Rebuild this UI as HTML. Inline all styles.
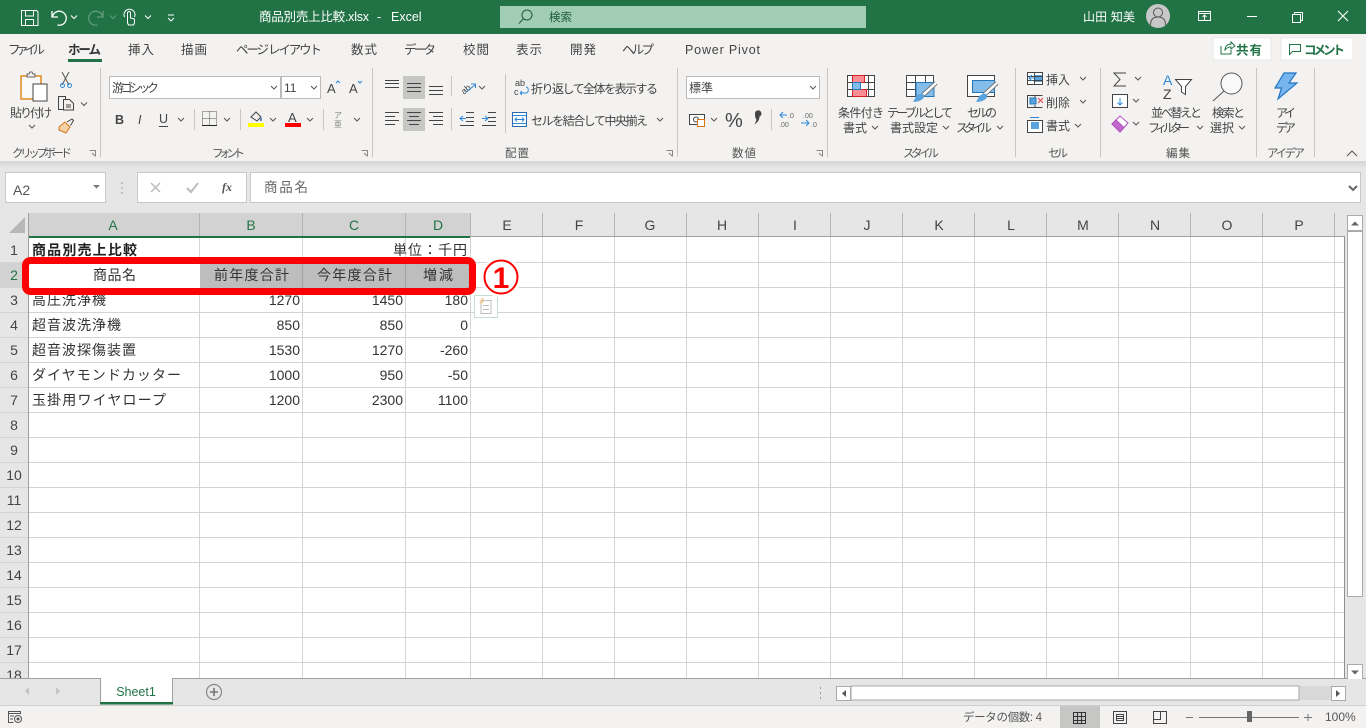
<!DOCTYPE html>
<html lang="ja"><head><meta charset="utf-8"><title>商品別売上比較.xlsx - Excel</title>
<style>
html,body{margin:0;padding:0;width:1366px;height:728px;overflow:hidden;background:#e6e6e6}
svg{display:block;position:absolute;left:0;top:0}
text{font-family:"Liberation Sans","Noto Sans CJK JP",sans-serif;fill:#444}
.r{font-size:12px;fill:#444}
.t{font-size:12.5px;fill:#444}
.g{font-size:11.5px;fill:#555}
.c{font-size:14px;fill:#333}
.h{font-size:14px;fill:#444;text-anchor:middle}
.s{font-size:14px;fill:#217346;text-anchor:middle}
.e{text-anchor:end}
.m{text-anchor:middle}
.ch{fill:none;stroke:#555;stroke-width:1}
.i{fill:none;stroke:#444;stroke-width:1}
.w{fill:none;stroke:#fff;stroke-width:1}
</style></head><body>
<svg width="1366" height="728" viewBox="0 0 1366 728">
<defs><path id="v" d="M0 0l3 3l3-3"/>
<linearGradient id="sh" x1="0" y1="0" x2="0" y2="1"><stop offset="0" stop-color="#d4d4d4"/><stop offset="1" stop-color="#e6e6e6"/></linearGradient></defs>
<!-- backgrounds -->
<rect width="1366" height="728" fill="#e6e6e6"/>
<rect width="1366" height="34" fill="#217346"/>
<rect y="34" width="1366" height="127" fill="#f3f2f1"/>
<rect y="161" width="1366" height="7" fill="url(#sh)"/>

<!-- title bar -->
<g class="w">
<path d="M21.500 10.500h15l1.500 1.500v13.500h-16.500z M25.500 10.500v5.500h8v-5.500 M25.500 25.500v-6h8v6"/>
<path d="M52 11v6h6 M52.500 16.500a7 7 0 1 1 5 8.500" stroke-width="1.300"/>
<use href="#v" x="71" y="15.500"/>
<path d="M124.500 17a5.500 5.500 0 1 1 10 0 M127.500 23v-10a1.500 1.500 0 0 1 3 0v5l4 1v4l-1 2h-5z"/>
<use href="#v" x="145" y="15.500"/>
<path d="M168 15h6 M168 18l3 3l3-3"/>
</g>
<g fill="none" stroke="#5f9b7c"><path d="M103 11v6h-6 M102.500 16.500a7 7 0 1 0-5 8.500" stroke-width="1.300"/><use href="#v" x="110" y="15.500"/></g>
<text x="259" y="21" style="font-size:12.500px;fill:#fff" textLength="110">商品別売上比較.xlsx</text>
<text x="377" y="21" style="font-size:12.500px;fill:#fff">-</text>
<text x="391" y="21" style="font-size:12.500px;fill:#fff">Excel</text>
<rect x="500" y="6" width="366" height="22" fill="#a0cdb3"/>
<circle cx="527" cy="15" r="5" fill="none" stroke="#1e5c3a"/><path d="M523.500 18.500l-4.500 5" stroke="#1e5c3a" fill="none"/>
<text x="549" y="21" style="font-size:11.500px;fill:#1e5c3a">検索</text>
<text x="1083" y="21" style="font-size:12px;fill:#fff" textLength="52">山田 知美</text>
<circle cx="1158" cy="16" r="12" fill="#c8c8c8"/>
<circle cx="1158" cy="12.500" r="4.500" fill="none" stroke="#555"/><path d="M1150.500 25c0-6 3-8 7.500-8s7.500 2 7.500 8" fill="none" stroke="#555"/>
<g class="w"><path d="M1198.500 11.500h12v9h-12z M1198.500 13.500h12 M1204.500 20v-5 M1202.500 17l2-2l2 2"/>
<path d="M1247 16.500h10"/><path d="M1292.500 14.500h8v8h-8z M1294.500 14.500v-2h8v8h-2"/>
<path d="M1338 11l10 10 M1348 11l-10 10" stroke-width="1.100"/></g>

<!-- tabs -->
<g class="t">
<text x="8" y="54" class="t" textLength="37">ファイル</text>
<text x="68" y="54" class="t" style="font-weight:bold;fill:#333" textLength="33">ホーム</text>
<text x="128" y="54" class="t" textLength="26">挿入</text>
<text x="181" y="54" class="t" textLength="26">描画</text>
<text x="236" y="54" class="t" textLength="86">ページ レイアウト</text>
<text x="351" y="54" class="t" textLength="26">数式</text>
<text x="404" y="54" class="t" textLength="32">データ</text>
<text x="463" y="54" class="t" textLength="26">校閲</text>
<text x="516" y="54" class="t" textLength="26">表示</text>
<text x="570" y="54" class="t" textLength="26">開発</text>
<text x="622" y="54" class="t" textLength="32">ヘルプ</text>
<text x="685" y="54" class="t" textLength="75">Power Pivot</text>
</g>
<rect x="68" y="59" width="34" height="3" fill="#217346"/>

<!-- share / comment -->
<rect x="1213" y="38" width="58" height="22" rx="1" fill="#fff" stroke="#e8e8e8"/>
<path d="M1221 46v8h10v-4 M1225 50c0-4 3-6 6-6v-2l4 4l-4 3v-2c-3 0-4 1-6 3z" fill="none" stroke="#217346"/>
<text x="1236" y="54.500" style="font-size:12.500px;font-weight:bold;fill:#217346" textLength="26">共有</text>
<rect x="1281" y="38" width="72" height="22" rx="1" fill="#fff" stroke="#e8e8e8"/>
<path d="M1289.500 44.500h11v7h-8l-3 3z" fill="none" stroke="#217346"/>
<text x="1304" y="54.500" style="font-size:12.500px;font-weight:bold;fill:#217346" textLength="41">コメント</text>

<!-- separators -->
<g stroke="#c6c6c6" stroke-width="1">
<path d="M100.500 68v89 M372.500 68v89 M677.500 68v89 M827.500 68v89 M1015.500 68v89 M1100.500 68v89 M1256.500 68v89 M1314.500 68v89"/>
<path d="M194.500 109v21 M240.500 109v21 M323.500 109v21 M505.500 74v59 M451.500 76v20 M451.500 108v22 M771.500 109v21"/>
</g>

<!-- clipboard -->
<rect x="21" y="76" width="20" height="23" fill="#f9f9f9" stroke="#e08a1e" stroke-width="1.500"/>
<path d="M27 76v-2h2l1-2h2l1 2h2v3h-8z" fill="#f3f2f1" stroke="#666"/>
<rect x="33" y="84" width="14" height="17" fill="#fff" stroke="#444"/>
<text x="10" y="117" class="r" textLength="42">貼り付け</text>
<use href="#v" x="29" y="125" class="ch"/>
<path d="M62 72l7 13 M69 72l-7 13" stroke="#555" fill="none"/><circle cx="62.500" cy="85.500" r="2" fill="none" stroke="#2b88d8"/><circle cx="69.500" cy="85.500" r="2" fill="none" stroke="#2b88d8"/>
<path d="M58.500 96.500h7v13h-7z" fill="#f3f2f1" stroke="#444"/><path d="M63.500 99.500h6l4 4v6.500h-10z" fill="#f3f2f1" stroke="#444"/><path d="M66 105h5 M66 107h5" stroke="#444"/>
<use href="#v" x="81" y="102.500" class="ch"/>
<path d="M59 127l6-5l5 5l-4 6l-7-3z" fill="#f6d0a6" stroke="#d67a17"/><path d="M67 122l5-3l1.500 1.500l-3 5" fill="none" stroke="#444"/>
<text x="12" y="157" class="g" textLength="60">クリップボード</text>
<path d="M89.500 150.500h6v6 M92 153l3 3" fill="none" stroke="#888"/>

<!-- font -->
<rect x="109.500" y="76.500" width="171" height="22" fill="#fff" stroke="#bbb"/>
<rect x="281.500" y="76.500" width="39" height="22" fill="#fff" stroke="#bbb"/>
<text x="112" y="92" style="font-size:12px;fill:#444" textLength="47">游ゴシック</text>
<text x="284" y="92" style="font-size:12px;fill:#444">11</text>
<use href="#v" x="271" y="86" class="ch"/><use href="#v" x="311" y="86" class="ch"/>
<text x="327" y="93" style="font-size:13px;fill:#444">A</text><path d="M336 83l2-2l2 2" fill="none" stroke="#2b88d8"/>
<text x="349" y="93" style="font-size:13px;fill:#444">A</text><path d="M358 81l2 2l2-2" fill="none" stroke="#2b88d8"/>
<text x="115" y="124" style="font-size:12.500px;font-weight:bold;fill:#444">B</text>
<text x="138" y="124" style="font-size:12.500px;font-style:italic;fill:#444">I</text>
<text x="159" y="123" style="font-size:12.500px;fill:#444">U</text><path d="M159 126.500h9" stroke="#444"/>
<use href="#v" x="178" y="118" class="ch"/>
<path d="M202.500 111.500h14v14h-14z M209.500 111.500v14 M202.500 118.500h14" fill="none" stroke="#555" stroke-dasharray="1 1"/><path d="M202 125.500h15" stroke="#222"/>
<use href="#v" x="224" y="118" class="ch"/>
<path d="M251 117l5-5l5 5l-4 4z" fill="none" stroke="#444"/><path d="M261 118v3" stroke="#2b6cb0" stroke-width="1.500"/>
<rect x="248" y="123" width="16" height="4" fill="#ffff00"/>
<use href="#v" x="270" y="118" class="ch"/>
<text x="288" y="122" style="font-size:13px;fill:#444">A</text>
<rect x="285" y="123" width="16" height="4" fill="#ff0000"/>
<use href="#v" x="307" y="118" class="ch"/>
<text x="334" y="118" style="font-size:8px;fill:#888">ア</text>
<text x="334" y="127" style="font-size:8px;fill:#888">亜</text>
<use href="#v" x="354" y="118" class="ch"/>
<text x="212" y="157" class="g" textLength="33">フォント</text>
<path d="M361.500 150.500h6v6 M364 153l3 3" fill="none" stroke="#888"/>

<!-- alignment -->
<rect x="403" y="76" width="22" height="23" fill="#c6c6c5"/>
<rect x="403" y="108" width="22" height="23" fill="#c6c6c5"/>
<path class="i" d="M385 80.500h14 M385 83.500h14 M385 87.500h14 M407 83.500h14 M407 87.500h14 M407 91.500h14 M429 86.500h14 M429 90.500h14 M429 94.500h14
M385 112.500h14 M385 116.500h10 M385 120.500h14 M385 124.500h10 M407 112.500h14 M409 116.500h10 M407 120.500h14 M409 124.500h10 M429 112.500h14 M433 116.500h10 M429 120.500h14 M433 124.500h10"/>
<text x="460" y="92" transform="rotate(-40 466 88)" style="font-size:9px;fill:#444">ab</text>
<path d="M466 92l9-7 M471 84h4.500v4" fill="none" stroke="#2b88d8"/>
<use href="#v" x="479" y="86" class="ch"/>
<path class="i" d="M466 112.500h8 M466 117.500h8 M466 121.500h8 M460 125.500h14"/>
<path d="M466 118.500h-6 M463 116l-3 2.500l3 2.500" fill="none" stroke="#2b88d8"/>
<path class="i" d="M488 112.500h8 M488 117.500h8 M488 121.500h8 M482 125.500h14"/>
<path d="M482 118.500h6 M485 116l3 2.500l-3 2.500" fill="none" stroke="#2b88d8"/>
<text x="515" y="86" style="font-size:9px;fill:#444">ab</text>
<text x="514" y="95" style="font-size:9px;fill:#444">c</text>
<path d="M520 93h6c3 0 3-6 0-6 M520 93l2-2 M520 93l2 2" fill="none" stroke="#2b88d8"/>
<text x="531" y="93" class="r" textLength="127">折り返して全体を表示する</text>
<rect x="512.500" y="112.500" width="14" height="14" fill="#fff" stroke="#2b6cb0"/><path d="M513 115.500h13 M513 123.500h13 M515 119.500h9 M517 117.500l-2 2l2 2 M522 117.500l2 2l-2 2" fill="none" stroke="#2b88d8"/>
<text x="531" y="125" class="r" textLength="117">セルを結合して中央揃え</text>
<use href="#v" x="657" y="118" class="ch"/>
<text x="505" y="157" class="g" textLength="24">配置</text>
<path d="M666.500 150.500h6v6 M669 153l3 3" fill="none" stroke="#888"/>

<!-- number -->
<rect x="686.500" y="76.500" width="133" height="22" fill="#fff" stroke="#bbb"/>
<text x="689" y="92" style="font-size:12px;fill:#444" textLength="24">標準</text>
<use href="#v" x="810" y="86" class="ch"/>
<rect x="689.500" y="114.500" width="15" height="10" fill="#fff" stroke="#444"/><circle cx="696" cy="119.500" r="2.500" fill="none" stroke="#444"/>
<rect x="697.500" y="119.500" width="7" height="7" fill="#fff" stroke="#d67a17"/>
<use href="#v" x="711" y="118" class="ch"/>
<text x="725" y="127" style="font-size:20px;fill:#444" textLength="18">%</text>
<path d="M755 113.500a3.200 3.200 0 1 1 4.500 3c0 3.500-2 6-5 8c1.300-2.500 2-4 1.800-5.500c-1-.6-1.300-3-1.300-5.500z" fill="#444"/>
<path d="M780 115h7 M783 112l-3 3l3 3" fill="none" stroke="#2b88d8"/><text x="788" y="118" style="font-size:7px;fill:#666">.0</text><text x="779" y="127" style="font-size:7px;fill:#666">.00</text>
<text x="803" y="118" style="font-size:7px;fill:#666">.00</text><path d="M801 123h8 M806 120l3 3l-3 3" fill="none" stroke="#2b88d8"/><text x="811" y="127" style="font-size:7px;fill:#666">.0</text>
<text x="732" y="157" class="g" textLength="24">数値</text>
<path d="M816.500 150.500h6v6 M819 153l3 3" fill="none" stroke="#888"/>

<!-- styles -->
<rect x="847.500" y="75.500" width="27" height="21" fill="#fff" stroke="#444"/>
<path d="M847 82.500h28 M847 89.500h28 M860.500 75v21 M868.500 75v21" stroke="#444" fill="none"/>
<rect x="852.500" y="75.500" width="12" height="7" fill="#fb8e95" stroke="#d42026"/><rect x="852.500" y="89.500" width="14" height="7" fill="#fb8e95" stroke="#d42026"/><rect x="852.500" y="82.500" width="8" height="7" fill="#84bde9" stroke="#2577b9"/>
<text x="838" y="117" class="r" textLength="46">条件付き</text>
<text x="843" y="132" class="r" textLength="24">書式</text><use href="#v" x="872" y="126" class="ch"/>

<rect x="906.500" y="75.500" width="27" height="21" fill="#fff" stroke="#444"/>
<path d="M906 82.500h28 M906 89.500h28 M915.500 75v21 M925.500 75v21" stroke="#444" fill="none"/>
<rect x="916" y="82.500" width="18" height="14" fill="#84bde9" stroke="#2577b9"/>
<path d="M936 83l-13 12" stroke="#777" stroke-width="4.500" fill="none"/><path d="M936 83l-13 12" stroke="#fff" stroke-width="2.500" fill="none"/>
<path d="M913 102c2-2 2-7 7-8c3-1 5 1 4 3c-1 3-6 5-11 5z" fill="#5ba3dd"/>
<text x="887" y="117" class="r" textLength="66">テーブルとして</text>
<text x="890" y="132" class="r" textLength="48">書式設定</text><use href="#v" x="943" y="126" class="ch"/>

<rect x="967.500" y="75.500" width="27" height="21" fill="#fff" stroke="#444"/>
<rect x="972.500" y="80.500" width="22" height="12" fill="#84bde9" stroke="#2577b9"/>
<path d="M997 83l-13 12" stroke="#777" stroke-width="4.500" fill="none"/><path d="M997 83l-13 12" stroke="#fff" stroke-width="2.500" fill="none"/>
<path d="M976 102c2-2 2-7 7-8c3-1 5 1 4 3c-1 3-6 5-11 5z" fill="#5ba3dd"/>
<text x="967" y="117" class="r" textLength="30">セルの</text>
<text x="956" y="132" class="r" textLength="36">スタイル</text><use href="#v" x="997" y="126" class="ch"/>
<text x="903" y="157" class="g" textLength="36">スタイル</text>

<!-- cells -->
<rect x="1027.500" y="72.500" width="15" height="12" fill="#fff" stroke="#444"/><rect x="1034" y="75" width="8" height="7" fill="#5ba3dd"/><path d="M1028 76.500h14 M1028 80.500h14 M1034.500 72v12" stroke="#444" fill="none"/><path d="M1036 78h-7 M1032 75l-3 3l3 3" stroke="#2b88d8" fill="none"/>
<text x="1046" y="84" class="r" textLength="24">挿入</text><use href="#v" x="1080" y="77" class="ch"/>
<path d="M1027.500 95.500h15 M1027.500 107.500h15 M1027.500 95v13 M1035 95v3 M1035 105v3" stroke="#444" fill="none"/><rect x="1030" y="98" width="6" height="6" fill="#5ba3dd" stroke="#2577b9"/><path d="M1038 98l5 5 M1043 98l-5 5" stroke="#e0454a" fill="none"/>
<text x="1046" y="107" class="r" textLength="24">削除</text><use href="#v" x="1080" y="100" class="ch"/>
<path d="M1030 117.500h9" stroke="#2b88d8"/><rect x="1027.500" y="120.500" width="15" height="12" fill="#fff" stroke="#444"/><rect x="1031" y="122" width="8" height="7" fill="#5ba3dd"/>
<text x="1046" y="130" class="r" textLength="24">書式</text><use href="#v" x="1075" y="124" class="ch"/>
<text x="1048" y="157" class="g" textLength="20">セル</text>

<!-- edit -->
<path d="M1126 73h-12l6 6.500l-6 6.500h12" fill="none" stroke="#444"/><use href="#v" x="1135" y="77" class="ch"/>
<rect x="1112.500" y="94.500" width="15" height="13" fill="#fff" stroke="#444"/><path d="M1120 98v7 M1117.500 102.500l2.500 2.500l2.500-2.500" stroke="#2b88d8" fill="none"/><use href="#v" x="1133" y="99" class="ch"/>
<path d="M1112 124l8-8l8 7l-8 9z" fill="#fff" stroke="#b14fbf"/><path d="M1112 124l4-4l8 7.500l-4 4.500z" fill="#c267cd" stroke="#b14fbf"/><use href="#v" x="1133" y="122" class="ch"/>
<text x="1163" y="85" style="font-size:14px;fill:#2b88d8">A</text>
<text x="1163" y="99" style="font-size:14px;fill:#444">Z</text>
<path d="M1175.500 79.500h16l-6 7v8l-4-2.500v-5.500z" fill="#fff" stroke="#444"/>
<text x="1151" y="117" class="r" textLength="51">並べ替えと</text>
<text x="1148" y="132" class="r" textLength="42">フィルター</text><use href="#v" x="1197" y="126" class="ch"/>
<circle cx="1231.500" cy="83.500" r="10.500" fill="#f9f9f9" stroke="#555"/><path d="M1224 91l-11 10" stroke="#555" fill="none"/>
<text x="1212" y="117" class="r" textLength="33">検索と</text>
<text x="1210" y="132" class="r" textLength="24">選択</text><use href="#v" x="1239" y="126" class="ch"/>
<text x="1166" y="157" class="g" textLength="24">編集</text>

<!-- ideas -->
<path d="M1284 73h12l-7 10h8l-19 16l3.500-11h-6.500z" fill="#77b5ee" stroke="#1f76c4" stroke-width="1.200"/>
<text x="1276" y="117" class="r" textLength="20">アイ</text>
<text x="1276" y="132" class="r" textLength="20">デア</text>
<text x="1267" y="157" class="g" textLength="38">アイデア</text>
<path d="M1347 156l5-5l5 5" fill="none" stroke="#555"/>

<!-- formula bar -->
<rect x="5.500" y="172.500" width="100" height="30" fill="#fff" stroke="#c8c8c8"/>
<text x="13" y="195" style="font-size:14px;fill:#555">A2</text>
<path d="M93 185h7l-3.500 3.500z" fill="#777"/>
<path d="M122 182v2 M122 187v2 M122 192v2" stroke="#999" fill="none"/>
<rect x="137.500" y="172.500" width="109" height="30" fill="#fff" stroke="#c8c8c8"/>
<rect x="250.500" y="172.500" width="1110" height="30" fill="#fff" stroke="#c8c8c8"/>
<path d="M151 183l9 9 M160 183l-9 9" stroke="#bbb" stroke-width="1.500" fill="none"/>
<path d="M187 188l4 4l7-9" stroke="#bbb" stroke-width="2" fill="none"/>
<text x="222" y="191" style="font-size:12px;font-family:'Liberation Serif',serif;font-style:italic;font-weight:bold;fill:#555">fx</text>
<text x="264" y="192" style="font-size:13.500px;fill:#666" textLength="44">商品名</text>
<path d="M1349 186l4 4l4-4" fill="none" stroke="#666" stroke-width="2"/>

<!-- grid -->
<rect x="28" y="237" width="1317" height="441" fill="#fff"/>
<rect x="0" y="213" width="1345" height="24" fill="#e6e6e6"/>
<rect x="0" y="237" width="28" height="441" fill="#e6e6e6"/>
<path d="M25 217v16h-16z" fill="#b7b7b7"/>
<rect x="29" y="213" width="441" height="23" fill="#d2d2d2"/>
<rect x="0" y="263" width="28" height="24" fill="#d2d2d2"/>
<path d="M0 262.500h1345 M0 287.500h1345 M0 312.500h1345 M0 337.500h1345 M0 362.500h1345 M0 387.500h1345 M0 412.500h1345 M0 437.500h1345 M0 462.500h1345 M0 487.500h1345 M0 512.500h1345 M0 537.500h1345 M0 562.500h1345 M0 587.500h1345 M0 612.500h1345 M0 637.500h1345 M0 662.500h1345" stroke="#d4d4d4" fill="none"/>
<path d="M199.500 237v441 M302.500 237v441 M405.500 237v441 M470.500 237v441 M542.500 237v441 M614.500 237v441 M686.500 237v441 M758.500 237v441 M830.500 237v441 M902.500 237v441 M974.500 237v441 M1046.500 237v441 M1118.500 237v441 M1190.500 237v441 M1262.500 237v441 M1334.500 237v441" stroke="#d4d4d4" fill="none"/>
<path d="M199.500 213v24 M302.500 213v24 M405.500 213v24 M470.500 213v24 M542.500 213v24 M614.500 213v24 M686.500 213v24 M758.500 213v24 M830.500 213v24 M902.500 213v24 M974.500 213v24 M1046.500 213v24 M1118.500 213v24 M1190.500 213v24 M1262.500 213v24 M1334.500 213v24" stroke="#b4b4b4" fill="none"/>
<path d="M28.500 213v465" stroke="#9f9f9f" fill="none"/>
<path d="M28 236.500h1317" stroke="#a0a0a0" fill="none"/>
<path d="M1344.500 237v441" stroke="#8f8f8f" fill="none"/>
<rect x="29" y="236" width="441" height="2" fill="#217346"/>
<rect x="27" y="263" width="2" height="24" fill="#217346"/>
<text x="113" y="230" class="s">A</text><text x="251" y="230" class="s">B</text><text x="354" y="230" class="s">C</text><text x="438" y="230" class="s">D</text>
<text x="507" y="230" class="h">E</text><text x="579" y="230" class="h">F</text><text x="650" y="230" class="h">G</text><text x="722" y="230" class="h">H</text><text x="795" y="230" class="h">I</text><text x="867" y="230" class="h">J</text><text x="939" y="230" class="h">K</text><text x="1011" y="230" class="h">L</text><text x="1083" y="230" class="h">M</text><text x="1155" y="230" class="h">N</text><text x="1227" y="230" class="h">O</text><text x="1299" y="230" class="h">P</text>
<text x="14" y="255" class="h">1</text><text x="14" y="280" class="s">2</text><text x="14" y="305" class="h">3</text><text x="14" y="330" class="h">4</text><text x="14" y="355" class="h">5</text><text x="14" y="380" class="h">6</text><text x="14" y="405" class="h">7</text><text x="14" y="430" class="h">8</text><text x="14" y="455" class="h">9</text><text x="14" y="480" class="h">10</text><text x="14" y="505" class="h">11</text><text x="14" y="530" class="h">12</text><text x="14" y="555" class="h">13</text><text x="14" y="580" class="h">14</text><text x="14" y="605" class="h">15</text><text x="14" y="630" class="h">16</text><text x="14" y="655" class="h">17</text><text x="14" y="680" class="h">18</text>

<!-- cell contents -->
<rect x="0" y="678" width="1366" height="1" fill="#a0a0a0"/>
<text x="32" y="255" class="c" style="font-weight:bold;fill:#222" textLength="105">商品別売上比較</text>
<text x="393" y="255" class="c" style="fill:#333" textLength="74">単位：千円</text>
<rect x="200" y="264" width="270" height="24" fill="#bdbdbd"/>
<rect x="29" y="264" width="171" height="24" fill="#fff"/>
<path d="M302.500 264v24 M405.500 264v24" stroke="#a3a3a3"/>
<text x="93" y="280" class="c" textLength="43">商品名</text>
<text x="214" y="280" class="c" textLength="75">前年度合計</text>
<text x="317" y="280" class="c" textLength="75">今年度合計</text>
<text x="423" y="280" class="c" textLength="30">増減</text>
<text x="32" y="305" class="c" textLength="74">高圧洗浄機</text><text x="300" y="305" class="c e">1270</text><text x="403" y="305" class="c e">1450</text><text x="468" y="305" class="c e">180</text>
<text x="32" y="330" class="c" textLength="89">超音波洗浄機</text><text x="300" y="330" class="c e">850</text><text x="403" y="330" class="c e">850</text><text x="468" y="330" class="c e">0</text>
<text x="32" y="355" class="c" textLength="104">超音波探傷装置</text><text x="300" y="355" class="c e">1530</text><text x="403" y="355" class="c e">1270</text><text x="468" y="355" class="c e">-260</text>
<text x="32" y="380" class="c" textLength="149">ダイヤモンドカッター</text><text x="300" y="380" class="c e">1000</text><text x="403" y="380" class="c e">950</text><text x="468" y="380" class="c e">-50</text>
<text x="32" y="405" class="c" textLength="134">玉掛用ワイヤロープ</text><text x="300" y="405" class="c e">1200</text><text x="403" y="405" class="c e">2300</text><text x="468" y="405" class="c e">1100</text>

<!-- annotation -->
<rect x="25.500" y="260.500" width="447" height="31" rx="5" fill="none" stroke="#ff0000" stroke-width="7"/>
<rect x="474.500" y="295.500" width="23" height="22" fill="#fff" stroke="#c5dccf"/>
<path d="M481 300.500h10v13h-10z M483 305.500h6 M483 309.500h6" fill="none" stroke="#bbb"/>
<path d="M482 298l-3 5h2l-1 3l4-5h-2l2-3z" fill="#f0c89a"/>
<circle cx="501" cy="277" r="20.500" fill="#fff" opacity=".85"/>
<circle cx="501" cy="277" r="16.500" fill="#fff" stroke="#ff0000" stroke-width="2"/>
<text x="501" y="288" class="m" style="font-size:30px;font-weight:bold;fill:#ff0000">1</text>

<!-- vertical scrollbar -->
<rect x="1345" y="213" width="21" height="465" fill="#e6e6e6"/>
<rect x="1347.500" y="215.500" width="15" height="15" fill="#fff" stroke="#aaa"/>
<path d="M1351 225.500h8l-4-4z" fill="#666"/>
<rect x="1347.500" y="231.500" width="15" height="365" fill="#fff" stroke="#aaa"/>
<rect x="1347.500" y="664.500" width="15" height="15" fill="#fff" stroke="#aaa"/>
<path d="M1351 670.500h8l-4 4z" fill="#666"/>

<!-- sheet tabs -->
<rect x="0" y="679" width="1366" height="27" fill="#e6e6e6"/>
<path d="M29 687v8l-4-4z M56 687v8l4-4z" fill="#c4c4c4"/>
<path d="M100.500 678.500v25 M172.500 678.500v25" stroke="#a0a0a0"/>
<rect x="101" y="678" width="71" height="25" fill="#fff"/>
<rect x="100" y="702" width="73" height="2.500" fill="#217346"/>
<text x="136" y="696" class="m" style="font-size:12.500px;fill:#217346">Sheet1</text>
<circle cx="214" cy="692" r="7.500" fill="none" stroke="#8a8a8a" stroke-width="1.200"/><path d="M210 692h8 M214 688v8" stroke="#777" stroke-width="1.600"/>
<path d="M820.500 687v2 M820.500 692v2 M820.500 697v2" stroke="#999"/>
<rect x="1299" y="686" width="33" height="14" fill="#d8d8d8"/>
<rect x="836.500" y="686.500" width="14" height="14" fill="#fff" stroke="#aaa"/><path d="M846 690v7l-4-3.500z" fill="#555"/>
<rect x="851" y="686" width="448" height="14" fill="#fff" stroke="#aaa"/>
<rect x="1331.500" y="686.500" width="14" height="14" fill="#fff" stroke="#aaa"/><path d="M1336 690v7l4-3.500z" fill="#555"/>

<!-- status bar -->
<rect x="0" y="706" width="1366" height="22" fill="#f3f2f1"/>
<path d="M0 705.500h1366" stroke="#cfcfcf"/>
<path d="M8.500 711.500h12v2h-12z M8.500 713.500v9h5 M10 716h4 M10 719h3" fill="none" stroke="#555"/><circle cx="18" cy="719" r="3.500" fill="none" stroke="#555"/><circle cx="18" cy="719" r="1.500" fill="#555"/>
<text x="963" y="721" style="font-size:11.500px;fill:#555" textLength="79">データの個数: 4</text>
<rect x="1060" y="706" width="40" height="22" fill="#c6c6c5"/>
<path d="M1073.500 712.500h12v11h-12z M1077.500 712v12 M1081.500 712v12 M1073 716.500h13 M1073 720.500h13" fill="none" stroke="#333"/>
<path d="M1113.500 711.500h13v12h-13z M1116.500 714.500h7v6h-7z M1117 716.500h6 M1117 718.500h6" fill="none" stroke="#444"/>
<path d="M1153.500 711.500h13v12h-13z M1160.500 711.500v8h-7" fill="none" stroke="#444"/>
<path d="M1186 717.500h7 M1199 717.500h100 M1304 717.500h8 M1308 714v7" stroke="#777" fill="none"/>
<rect x="1247" y="711" width="5" height="11" fill="#666"/>
<text x="1325" y="721" style="font-size:12px;fill:#555">100%</text>
</svg>
</body></html>
